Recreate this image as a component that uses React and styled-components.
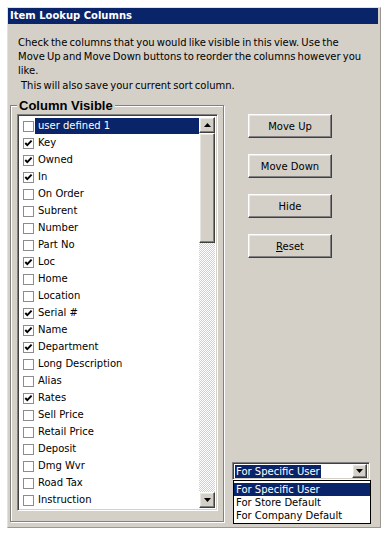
import React from 'react';
import styled, { createGlobalStyle, css } from 'styled-components';

const GlobalStyle = createGlobalStyle`
  html, body {
    margin: 0;
    padding: 0;
    background: #fff;
  }
  body {
    font-family: "DejaVu Sans", "Liberation Sans", sans-serif;
    font-size: 10px;
    color: #000;
  }
`;

const raised = css`
  box-sizing: border-box;
  border: 1px solid;
  border-color: #fff #404040 #404040 #fff;
  box-shadow: inset -1px -1px 0 #808080, inset 1px 1px 0 #e8e6e1;
  background: #d4d0c8;
`;

const sunken = css`
  box-sizing: border-box;
  border: 1px solid;
  border-color: #808080 #fff #fff #808080;
  box-shadow: inset 1px 1px 0 #404040, inset -1px -1px 0 #d4d0c8;
`;

const Window = styled.div`
  margin: 7px 0 0 7px;
  width: 374px;
  height: 521px;
  box-sizing: border-box;
  background: #d4d0c8;
  border: 1px solid;
  border-color: #e4e2dc #9a9890 #9a9890 #e4e2dc;
  padding-right: 2px;
  display: flex;
  flex-direction: column;
`;

const TitleBar = styled.div`
  height: 16px;
  line-height: 16px;
  background: #0a246a;
  color: #fff;
  font-weight: bold;
  padding-left: 2px;
  white-space: nowrap;
`;

const Intro = styled.div`
  padding: 12px 0 0 10px;
  line-height: 14px;
  word-spacing: -1px;
`;

const IntroNote = styled.div`
  padding-left: 3px;
  margin-top: 1px;
`;

const Main = styled.div`
  display: flex;
  align-items: stretch;
  padding-left: 2px;
  margin-top: 5px;
`;

const GroupBox = styled.fieldset`
  margin: 0;
  width: 214px;
  box-sizing: border-box;
  padding: 1px 5px 10px 6px;
  border: 1px solid #808080;
  box-shadow: inset 1px 1px 0 #fff, 1px 1px 0 #fff;
  min-width: 0;
`;

const Legend = styled.legend`
  font-family: "Liberation Sans", Arial, sans-serif;
  font-weight: bold;
  font-size: 13px;
  line-height: 15px;
  padding: 0 2px;
  background: #d4d0c8;
`;

const ListBox = styled.div`
  ${sunken};
  width: 201px;
  height: 397px;
  padding: 2px;
  background: #fff;
  display: flex;
`;

const Rows = styled.div`
  flex: 1;
  display: flex;
  flex-direction: column;
  overflow: hidden;
`;

const Row = styled.div`
  height: 17px;
  flex: none;
  display: flex;
  align-items: center;
`;

const CheckBox = styled.span`
  width: 11px;
  height: 11px;
  box-sizing: border-box;
  border: 1px solid #8c8c8c;
  background: #fff;
  margin: 1px 1px 0 3px;
  flex: none;
  display: flex;
  align-items: center;
  justify-content: center;
`;

const Label = styled.span`
  flex: 1;
  height: 16px;
  line-height: 16px;
  padding-left: 3px;
  white-space: nowrap;
  background: ${(p) => (p.$selected ? '#0a246a' : 'transparent')};
  color: ${(p) => (p.$selected ? '#fff' : '#000')};
`;

const ScrollBar = styled.div`
  width: 16px;
  flex: none;
  display: flex;
  flex-direction: column;
`;

const ScrollButton = styled.div`
  ${raised};
  height: 16px;
  flex: none;
  display: flex;
  align-items: center;
  justify-content: center;
`;

const Thumb = styled.div`
  ${raised};
  height: 110px;
  flex: none;
`;

const Track = styled.div`
  flex: 1;
  background: repeating-conic-gradient(#d4d0c8 0 25%, #fff 0 50%) 0 0 / 2px 2px;
`;

const Side = styled.div`
  width: 138px;
  margin-left: 8px;
  padding-top: 16px;
  display: flex;
  flex-direction: column;
  gap: 16px;
`;

const Button = styled.div`
  ${raised};
  width: 84px;
  height: 24px;
  margin-left: 16px;
  display: flex;
  align-items: center;
  justify-content: center;
`;

const Combo = styled.div`
  ${sunken};
  position: relative;
  margin-top: auto;
  margin-bottom: 42px;
  height: 18px;
  padding: 2px;
  background: #fff;
  display: flex;
  align-items: center;
`;

const ComboValue = styled.span`
  background: #0a246a;
  color: #fff;
  line-height: 13px;
  padding: 0 1px;
  white-space: nowrap;
`;

const ComboArrow = styled.div`
  ${raised};
  margin-left: auto;
  width: 15px;
  height: 14px;
  display: flex;
  align-items: center;
  justify-content: center;
`;

const DropList = styled.div`
  position: absolute;
  left: 0;
  top: calc(100% + 1px);
  width: 138px;
  box-sizing: border-box;
  border: 1px solid #000;
  background: #fff;
  padding: 2px 0 1px;
`;

const DropItem = styled.div`
  height: 13px;
  line-height: 13px;
  padding-left: 2px;
  white-space: nowrap;
  background: ${(p) => (p.$selected ? '#0a246a' : 'transparent')};
  color: ${(p) => (p.$selected ? '#fff' : '#000')};
`;

const Arrow = ({ up }) => (
  <svg width="7" height="4" viewBox="0 0 7 4">
    <polygon points={up ? '3.5,0 7,4 0,4' : '0,0 7,0 3.5,4'} fill="#000" />
  </svg>
);

const Check = () => (
  <svg width="9" height="9" viewBox="0 0 9 9">
    <polyline points="1.3,4 3.3,6.2 7.6,1.6" fill="none" stroke="#000" strokeWidth="1.9" />
  </svg>
);

const columns = [
  ['user defined 1', false],
  ['Key', true],
  ['Owned', true],
  ['In', true],
  ['On Order', false],
  ['Subrent', false],
  ['Number', false],
  ['Part No', false],
  ['Loc', true],
  ['Home', false],
  ['Location', false],
  ['Serial #', true],
  ['Name', true],
  ['Department', true],
  ['Long Description', false],
  ['Alias', false],
  ['Rates', true],
  ['Sell Price', false],
  ['Retail Price', false],
  ['Deposit', false],
  ['Dmg Wvr', false],
  ['Road Tax', false],
  ['Instruction', false],
];

const scopes = ['For Specific User', 'For Store Default', 'For Company Default'];

export default function App() {
  return (
    <>
      <GlobalStyle />
      <Window>
        <TitleBar>Item Lookup Columns</TitleBar>
        <Intro>
          Check the columns that you would like visible in this view. Use the
          <br />
          Move Up and Move Down buttons to reorder the columns however you
          <br />
          like.
          <IntroNote>This will also save your current sort column.</IntroNote>
        </Intro>
        <Main>
          <GroupBox>
            <Legend>Column Visible</Legend>
            <ListBox>
              <Rows>
                {columns.map(([name, checked], i) => (
                  <Row key={name}>
                    <CheckBox>{checked && <Check />}</CheckBox>
                    <Label $selected={i === 0}>{name}</Label>
                  </Row>
                ))}
              </Rows>
              <ScrollBar>
                <ScrollButton><Arrow up /></ScrollButton>
                <Thumb />
                <Track />
                <ScrollButton><Arrow /></ScrollButton>
              </ScrollBar>
            </ListBox>
          </GroupBox>
          <Side>
            <Button>Move Up</Button>
            <Button>Move Down</Button>
            <Button>Hide</Button>
            <Button><span><u>R</u>eset</span></Button>
            <Combo>
              <ComboValue>For Specific User</ComboValue>
              <ComboArrow><Arrow /></ComboArrow>
              <DropList>
                {scopes.map((s, i) => (
                  <DropItem key={s} $selected={i === 0}>{s}</DropItem>
                ))}
              </DropList>
            </Combo>
          </Side>
        </Main>
      </Window>
    </>
  );
}
